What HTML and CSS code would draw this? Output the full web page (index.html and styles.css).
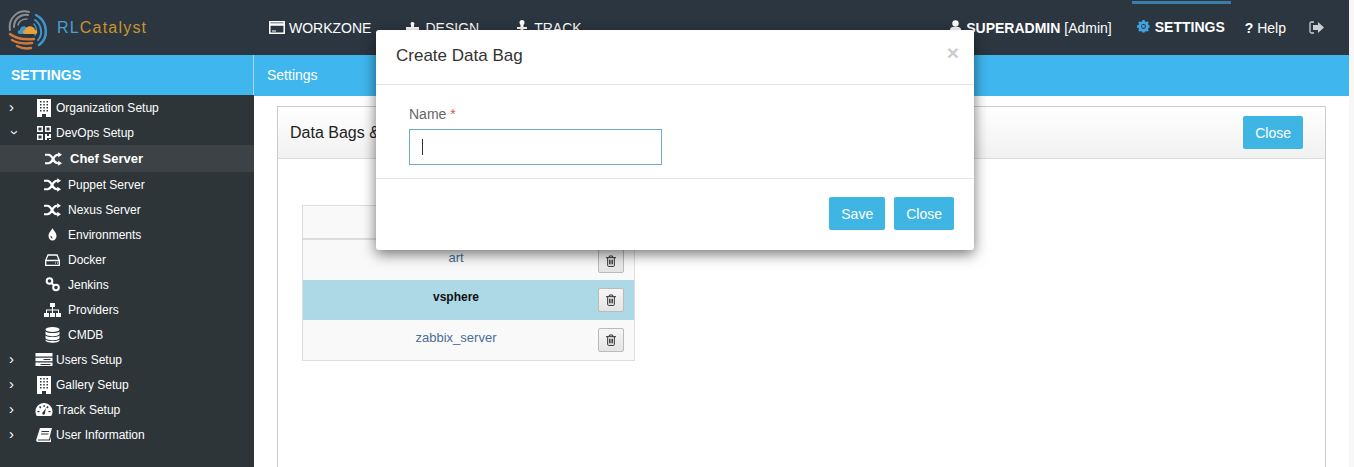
FILE: index.html
```html
<!DOCTYPE html>
<html lang="en">
<head>
    <meta charset="UTF-8">
    <title>RLCatalyst Settings</title>
    <link rel="stylesheet" href="styles.css">
</head>
<body>
    <svg class="icon-defs" width="0" height="0">
        <symbol id="i-random" viewBox="0 0 20 16">
            <path d="M0 3h4c3 0 4 2 5.500 5s3 5 5.500 5h1M0 13h4c3 0 4-2 5.500-5s3-5 5.500-5h1" fill="none" stroke="currentColor" stroke-width="2.600"/>
            <path d="M15.500 0l4.500 3-4.500 3zM15.500 10l4.500 3-4.500 3z" fill="currentColor"/>
        </symbol>
        <symbol id="i-building" viewBox="0 0 14 18">
            <path fill-rule="evenodd" fill="currentColor" d="M0 0h14v18H9v-3H5v3H0zM3 2v1.500h1.500V2zM6.300 2v1.500h1.500V2zM9.500 2v1.500H11V2zM3 5v1.500h1.500V5zM6.300 5v1.500h1.500V5zM9.500 5v1.500H11V5zM3 8v1.500h1.500V8zM6.300 8v1.500h1.500V8zM9.500 8v1.500H11V8zM3 11v1.500h1.500V11zM6.300 11v1.500h1.500V11zM9.500 11v1.500H11V11z"/>
        </symbol>
        <symbol id="i-trash" viewBox="0 0 12 14">
            <path fill="none" stroke="currentColor" stroke-width="1.200" d="M0 3h12M2 3v9.500c0 .6.400 1 1 1h6c.6 0 1-.4 1-1V3M4 3V1h4v2M4.300 5.500v5.500M6 5.500v5.500M7.700 5.500v5.500"/>
        </symbol>
    </svg>

    <header class="topbar">
        <div class="logo">
            <svg class="logo-mark" width="44" height="50" viewBox="0 0 44 50">
                <g fill="none" stroke-linecap="round">
                    <path d="M3 27C1 15 11 6 22 9" stroke="#8a8f92" stroke-width="2"/>
                    <path d="M7 24C7 16 13 11 21 12" stroke="#8a8f92" stroke-width="2"/>
                    <path d="M11 22c1-4 5-6 9-6" stroke="#8a8f92" stroke-width="1.500"/>
                    <path d="M29 12c12 6 13 23 3 30" stroke="#3f97c9" stroke-width="2.500"/>
                    <path d="M28 17c7 5 8 15 3 20" stroke="#3f97c9" stroke-width="2"/>
                    <path d="M27 21c3 3 3 8 1 11" stroke="#3f97c9" stroke-width="1.500"/>
                    <path d="M3 31c5 4 13 6 24 5" stroke="#d0793a" stroke-width="2.500"/>
                    <path d="M5 37c5 3 12 4 20 3" stroke="#d0793a" stroke-width="2.500"/>
                    <path d="M10 43c4 2 9 3 14 2" stroke="#d0793a" stroke-width="2.500"/>
                </g>
                <path d="M20 31h-7c-3 0-3-4 0-4 0-4 5-5 7-2z" fill="#3f97c9"/>
                <path d="M18 31c-2 0-3-3 0-4 1-5 9-5 10 0 3 0 3 4 0 4z" fill="#e9a13a"/>
            </svg>
            <span class="logo-text"><span class="logo-rl">RL</span><span class="logo-name">Catalyst</span></span>
        </div>
        <nav class="main-nav">
            <a class="nav-link">
                <svg width="16" height="13" viewBox="0 0 16 13"><path fill="none" stroke="#fff" stroke-width="1.500" d="M.8.800h14.400v11.400H.8z"/><path stroke="#fff" stroke-width="2.500" d="M1 3.500h14"/><path stroke="#fff" d="M3 10h4"/></svg>
                WORKZONE
            </a>
            <a class="nav-link nav-design">
                <svg width="14" height="14" viewBox="0 0 14 14"><path fill="#fff" d="M0 6h5V4c-1-1-.5-3 1.500-3s2.500 2 1.500 3v2h5v8H0z"/></svg>
                DESIGN
            </a>
            <a class="nav-link nav-track">
                <svg width="10" height="15" viewBox="0 0 10 15"><circle cx="5" cy="2.500" r="2.500" fill="#fff"/><path fill="#fff" d="M3.500 4h3v3H10v2H6.500l-1 6h-1l-1-6H0V7h3.500z"/></svg>
                TRACK
            </a>
        </nav>
        <div class="user-nav">
            <span class="user">
                <svg width="11" height="13" viewBox="0 0 11 13"><circle cx="5.500" cy="3.500" r="3.200" fill="#fff"/><path fill="#fff" d="M0 13V9.500C0 8 1.500 7 3 7h5c1.500 0 3 1 3 2.500V13z"/></svg>
                <b>SUPERADMIN</b> [Admin]
            </span>
            <span class="settings-tab">
                <svg width="13" height="13" viewBox="0 0 13 13"><circle cx="6.500" cy="6.500" r="3.800" fill="none" stroke="#3fa6e0" stroke-width="2.800"/><path stroke="#3fa6e0" stroke-width="2.400" stroke-dasharray="2.400 2.700" d="M6.500 0v13M0 6.500h13"/><path stroke="#3fa6e0" stroke-width="2.400" d="M2 2l9 9M11 2l-9 9" stroke-dasharray="2.400 8"/></svg>
                <b>SETTINGS</b>
            </span>
            <span class="help"><b>?</b> Help</span>
            <svg class="logout" width="15" height="13" viewBox="0 0 15 13"><path fill="none" stroke="#c9ced2" stroke-width="1.300" d="M5 1H2.500C1.500 1 1 1.500 1 2.500v8c0 1 .5 1.500 1.500 1.500H5"/><path fill="#c9ced2" d="M4 4h5V1l6 5.500-6 5.500V9H4z"/></svg>
        </div>
    </header>

    <div class="layout">
        <aside class="sidebar">
            <div class="sidebar-title">SETTINGS</div>
            <ul class="menu">
                <li class="menu-item">
                    <span class="caret">&#8250;</span>
                    <svg class="menu-icon" width="14" height="18"><use href="#i-building"/></svg>
                    Organization Setup
                </li>
                <li class="menu-item">
                    <span class="caret caret-open">&#8250;</span>
                    <svg class="menu-icon" width="14" height="14" viewBox="0 0 14 14"><path fill-rule="evenodd" fill="currentColor" d="M0 0h6v6H0zM1.500 1.500v3h3v-3zM8 0h6v6H8zM9.500 1.500v3h3v-3zM0 8h6v6H0zM1.500 9.500v3h3v-3zM8 8h2v2h2V8h2v4h-4v2H8zM12 13h2v1h-2z"/></svg>
                    DevOps Setup
                </li>
                <li class="sub-item sub-active">
                    <svg class="sub-icon" width="17" height="14"><use href="#i-random"/></svg>
                    Chef Server
                </li>
                <li class="sub-item">
                    <svg class="sub-icon" width="17" height="14"><use href="#i-random"/></svg>
                    Puppet Server
                </li>
                <li class="sub-item">
                    <svg class="sub-icon" width="17" height="14"><use href="#i-random"/></svg>
                    Nexus Server
                </li>
                <li class="sub-item">
                    <svg class="sub-icon" width="17" height="13" viewBox="0 0 17 13"><path fill="currentColor" fill-rule="evenodd" d="M8.500 0c1 2.500 4 4.500 4 8 0 2.500-1.800 4.500-4 4.500s-4-2-4-4.500c0-3.500 3-5.500 4-8zM6.500 8c0 1.500.8 2.500 2 2.500V9.500c-.7 0-1-.7-1-1.500z"/></svg>
                    Environments
                </li>
                <li class="sub-item">
                    <svg class="sub-icon" width="17" height="12" viewBox="0 0 17 12"><path fill="none" stroke="currentColor" stroke-width="1.300" d="M1.700 6.500L4 1h9l2.300 5.500v4.800H1.700zM1.700 6.500h13.600"/><path stroke="currentColor" d="M11 9h1M13 9h1"/></svg>
                    Docker
                </li>
                <li class="sub-item">
                    <svg class="sub-icon" width="17" height="15" viewBox="0 0 17 15"><g fill="none" stroke="currentColor" stroke-width="2"><circle cx="5.500" cy="4" r="2.800"/><circle cx="12" cy="10.500" r="2.800"/><path d="M7.500 6l2.500 2.500"/></g></svg>
                    Jenkins
                </li>
                <li class="sub-item">
                    <svg class="sub-icon" width="17" height="14" viewBox="0 0 17 14"><path fill="currentColor" d="M6 0h5v4H9v2.500h6V10h2v4h-5v-4h2V7.500H9V10h2v4H6v-4h2V7.500H3V10h2v4H0v-4h2V6.500h6V4H6z"/></svg>
                    Providers
                </li>
                <li class="sub-item">
                    <svg class="sub-icon" width="17" height="16" viewBox="0 0 17 16"><g fill="currentColor"><ellipse cx="8.500" cy="2.500" rx="7" ry="2.500"/><path d="M1.500 4.500c2 2 12 2 14 0v2.500c-1 3-13 3-14 0zM1.500 8.500c2 2 12 2 14 0V11c-1 3-13 3-14 0zM1.500 12.500c2 2 12 2 14 0v1c-1 3-13 3-14 0z"/></g></svg>
                    CMDB
                </li>
                <li class="menu-item">
                    <span class="caret">&#8250;</span>
                    <svg class="menu-icon" width="17" height="13" viewBox="0 0 17 13"><path fill="currentColor" fill-rule="evenodd" d="M0 0h17v3.500H0zM0 4.700h17v3.600H0zM8 6h7v1H8zM0 9.500h17V13H0zM5 11h10v1H5z"/></svg>
                    Users Setup
                </li>
                <li class="menu-item">
                    <span class="caret">&#8250;</span>
                    <svg class="menu-icon" width="14" height="18"><use href="#i-building"/></svg>
                    Gallery Setup
                </li>
                <li class="menu-item">
                    <span class="caret">&#8250;</span>
                    <svg class="menu-icon" width="17" height="13" viewBox="0 0 17 13"><path fill="currentColor" fill-rule="evenodd" d="M8.500 0C3.800 0 0 3.800 0 8.500c0 1.700.5 3.200 1.300 4.500h14.400c.8-1.300 1.300-2.800 1.300-4.500C17 3.800 13.200 0 8.500 0zM8 2h1.200v2H8zM3.500 4l1.200-1 1.200 1.600-1.200 1zM12 3l1.200 1-1.500 1.600-1-1zM2 8h2v1.300H2zM13 8h2v1.300h-2zM7.500 9l3-4-1 5a1.400 1.400 0 1 1-2-1z"/></svg>
                    Track Setup
                </li>
                <li class="menu-item">
                    <span class="caret">&#8250;</span>
                    <svg class="menu-icon" width="16" height="14" viewBox="0 0 16 14"><path fill="currentColor" fill-rule="evenodd" d="M4 0h12l-3 11.500H2.500c-.8 0-1 1-.3 1H14l1-4v5.500H2C.5 14 0 12.800.3 11.500zM5.500 3v1h7.500V3zM5 5.500v1h7.500v-1z"/></svg>
                    User Information
                </li>
            </ul>
        </aside>

        <main class="content">
            <div class="breadcrumb">Settings</div>
            <section class="panel">
                <div class="panel-head">
                    <h2 class="panel-title">Data Bags &amp; Items</h2>
                    <button class="btn">Close</button>
                </div>
                <div class="panel-body">
                    <div class="bags">
                        <div class="bags-head"></div>
                        <div class="bag-row">
                            <a class="bag-name bag-art">art</a>
                            <button class="trash trash-art"><svg width="10" height="12"><use href="#i-trash"/></svg></button>
                        </div>
                        <div class="bag-row bag-selected">
                            <a class="bag-name">vsphere</a>
                            <button class="trash"><svg width="10" height="12"><use href="#i-trash"/></svg></button>
                        </div>
                        <div class="bag-row">
                            <a class="bag-name">zabbix_server</a>
                            <button class="trash"><svg width="10" height="12"><use href="#i-trash"/></svg></button>
                        </div>
                    </div>
                </div>
            </section>
        </main>
    </div>

    <div class="modal">
        <div class="modal-head">
            <h3 class="modal-title">Create Data Bag</h3>
            <span class="modal-x">&times;</span>
        </div>
        <div class="modal-body">
            <label class="field-label">Name <span class="required">*</span></label>
            <div class="field-input"><span class="field-caret"></span></div>
        </div>
        <div class="modal-foot">
            <button class="btn btn-foot">Save</button>
            <button class="btn btn-foot">Close</button>
        </div>
    </div>
</body>
</html>
```

FILE: styles.css
```css
html, body {
    height: 467px;
    overflow: hidden;
}

body {
    margin: 0;
    padding-right: 5px;
    background-color: #f7f7f7;
    font-family: "Liberation Sans", Arial, sans-serif;
    color: #333;
}

.icon-defs {
    position: absolute;
}

/* top bar */
.topbar {
    display: flex;
    align-items: center;
    height: 55px;
    background-color: #2c3640;
    color: #fff;
}

.logo {
    display: flex;
    align-items: center;
    width: 269px;
    flex-shrink: 0;
    padding-left: 7px;
    box-sizing: border-box;
}

.logo-text {
    font-family: "Liberation Sans Narrow", "Liberation Sans", sans-serif;
    font-size: 16px;
    letter-spacing: 1.200px;
    margin-left: 6px;
}

.logo-rl {
    color: #4a9fce;
}

.logo-name {
    color: #c9952f;
}

.main-nav {
    display: flex;
    align-items: center;
}

.nav-link {
    display: flex;
    align-items: center;
    gap: 4px;
    font-size: 14px;
}

.nav-design {
    margin-left: 35px;
    gap: 5px;
}

.nav-track {
    margin-left: 38px;
    gap: 7px;
}

.user-nav {
    display: flex;
    align-items: center;
    margin-left: auto;
    margin-right: 25px;
    font-size: 14px;
}

.user svg {
    margin-right: 1px;
}

.settings-tab {
    display: flex;
    align-items: center;
    gap: 5px;
    height: 52px;
    margin-left: 20px;
    padding: 0 6px 0 5px;
    border-top: 3px solid #3a7ea8;
    box-sizing: border-box;
    margin-top: -2px;
    padding-bottom: 3px;
}

.help {
    margin-left: 14px;
}

.logout {
    margin-left: 23px;
}

/* sidebar */
.layout {
    display: flex;
    height: 412px;
}

.sidebar {
    width: 254px;
    flex-shrink: 0;
    background-color: #2d3538;
    color: #fff;
}

.sidebar-title {
    height: 40px;
    line-height: 40px;
    padding-left: 11px;
    background-color: #3fb6ee;
    font-size: 14px;
    font-weight: bold;
    border-right: 1px solid #a5d8f0;
}

.menu {
    list-style: none;
    margin: 0;
    padding: 0;
    font-size: 12px;
}

.menu-item {
    display: flex;
    align-items: center;
    height: 25px;
}

.caret {
    width: 32px;
    padding-left: 9px;
    box-sizing: border-box;
    font-size: 15px;
    line-height: 15px;
    flex-shrink: 0;
    margin-top: -2px;
}

.caret-open {
    transform: rotate(90deg);
    padding-left: 0;
    width: 9px;
    margin: 0 12px 0 11px;
    text-align: center;
}

.menu-icon {
    width: 24px;
    flex-shrink: 0;
    margin-right: 0;
}

.sub-item {
    display: flex;
    align-items: center;
    height: 25px;
    padding-left: 44px;
}

.sub-icon {
    flex-shrink: 0;
    margin-right: 7px;
}

.sub-active {
    height: 27px;
    background-color: #3c4245;
    font-size: 13px;
    font-weight: bold;
    padding-left: 45px;
    margin-top: 0;
}

.sub-active .sub-icon {
    margin-right: 8px;
}

/* main area */
.content {
    flex: 1;
    background-color: #fff;
}

.breadcrumb {
    height: 41px;
    line-height: 40px;
    padding-left: 13px;
    background-color: #3fb6ee;
    color: #fff;
    font-size: 14px;
}

.panel {
    margin: 10px 23px 0;
    height: 400px;
    border: 1px solid #ccc;
}

.panel-head {
    display: flex;
    align-items: center;
    justify-content: space-between;
    height: 51px;
    padding: 0 22px 0 12px;
    background: linear-gradient(#fff, #f1f1f1);
    border-bottom: 1px solid #ddd;
}

.panel-title {
    margin: 0;
    font-size: 16px;
    font-weight: normal;
    color: #222;
}

.btn {
    height: 33px;
    padding: 0 12px;
    border: none;
    border-radius: 2px;
    background-color: #3fb5e3;
    color: #fff;
    font-family: inherit;
    font-size: 14px;
}

.panel-body {
    padding: 46px 24px 0;
}

.bags {
    width: 331px;
    border: 1px solid #ddd;
    background-color: #f9f9f9;
}

.bags-head {
    height: 32px;
    border-bottom: 2px solid #ddd;
}

.bag-row {
    display: flex;
    align-items: center;
    height: 40px;
}

.bag-name {
    width: 306px;
    flex-shrink: 0;
    text-align: center;
    font-size: 13px;
    color: #4a6d95;
    margin-top: -6px;
}

.bag-selected {
    background-color: #add8e6;
}

.bag-selected .bag-name {
    font-size: 12px;
    font-weight: bold;
    color: #111;
}

.trash {
    display: flex;
    align-items: center;
    justify-content: center;
    width: 26px;
    height: 24px;
    margin-left: -11px;
    padding: 0;
    border: 1px solid #bbb;
    border-radius: 2px;
    background: linear-gradient(#f6f6f6, #e4e4e4);
    color: #333;
}

.trash-art {
    margin-top: 1px;
}

/* dialog */
.modal {
    position: absolute;
    left: 376px;
    top: 30px;
    width: 598px;
    height: 220px;
    background-color: #fff;
    border-radius: 3px;
    box-shadow: 0 4px 14px rgba(0, 0, 0, 0.55);
}

.modal-head {
    display: flex;
    justify-content: space-between;
    height: 54px;
    padding: 0 15px 0 20px;
    border-bottom: 1px solid #e5e5e5;
    box-sizing: border-box;
    height: 55px;
}

.modal-title {
    margin: 0;
    font-size: 17px;
    font-weight: normal;
    line-height: 52px;
    color: #333;
}

.modal-x {
    font-size: 21px;
    font-weight: bold;
    line-height: 46px;
    color: #ccc;
}

.modal-body {
    height: 93px;
    padding: 21px 33px 0;
    box-sizing: border-box;
    border-bottom: 1px solid #e5e5e5;
    height: 94px;
}

.field-label {
    display: block;
    font-size: 14px;
    line-height: 16px;
    color: #666;
    margin-bottom: 7px;
}

.required {
    color: #d9534f;
}

.field-input {
    display: flex;
    align-items: center;
    width: 253px;
    height: 36px;
    padding-left: 12px;
    box-sizing: border-box;
    border: 1px solid #70aac9;
}

.field-caret {
    width: 1px;
    height: 16px;
    background-color: #333;
}

.modal-foot {
    display: flex;
    justify-content: flex-end;
    gap: 9px;
    padding: 18px 20px 0;
}
```
